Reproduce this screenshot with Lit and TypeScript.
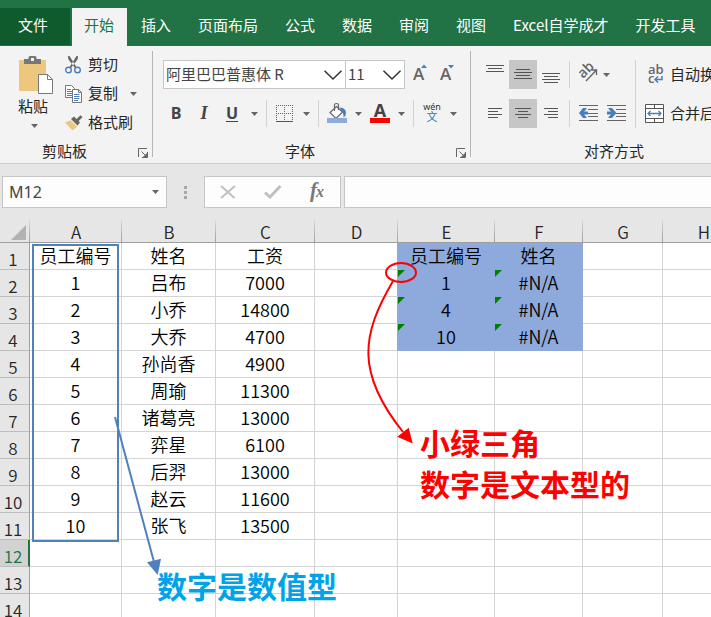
import { LitElement, html, svg, css } from "lit";
import { customElement } from "lit/decorators.js";
import { classMap } from "lit/directives/class-map.js";

const COLUMNS = ["A", "B", "C", "D", "E", "F", "G", "H"];

const ROWS: string[][] = [
  ["员工编号", "姓名", "工资", "", "员工编号", "姓名"],
  ["1", "吕布", "7000", "", "1", "#N/A"],
  ["2", "小乔", "14800", "", "4", "#N/A"],
  ["3", "大乔", "4700", "", "10", "#N/A"],
  ["4", "孙尚香", "4900"],
  ["5", "周瑜", "11300"],
  ["6", "诸葛亮", "13000"],
  ["7", "弈星", "6100"],
  ["8", "后羿", "13000"],
  ["9", "赵云", "11600"],
  ["10", "张飞", "13500"],
  [],
  [],
  [],
];

const CURRENT_ROW = 12;

const TABS = ["开始", "插入", "页面布局", "公式", "数据", "审阅", "视图", "Excel自学成才", "开发工具"];

const arrow = html`<svg class="arrow" width="7" height="4" viewBox="0 0 7 4"><path d="M0 0h7L3.5 4z" fill="#666" /></svg>`;

const chevron = html`<svg class="chevron" width="18" height="10" viewBox="0 0 18 10">
  <path d="M.5 .7 9 9 17.500 .7" fill="none" stroke="#333" stroke-width="1.5" />
</svg>`;

const launcher = html`<svg width="10" height="10" viewBox="0 0 10 10">
  <path d="M.5 9V.5H9M3.500 3.500 8 8M9.500 4v5.500H4" fill="none" stroke="#666" />
  <path d="M9 9V5L5 9z" fill="#666" />
</svg>`;

/* Horizontal rules of an alignment glyph: [x, y, length] */
const lines = (items: number[][]) =>
  html`<svg width="20" height="19" viewBox="0 0 20 19">
    ${items.map(([x, y, w]) => svg`<rect x=${x} y=${y} width=${w} height="1" fill="#555" />`)}
  </svg>`;

const pasteIcon = html`<svg width="34" height="38" viewBox="0 0 34 38">
  <rect x="0" y="4" width="27" height="31" rx="1" fill="#eec77f" />
  <path d="M5 3h4.500V1.500Q9.500 0 11 0h5q1.500 0 1.500 1.500V3H22v5H5z" fill="#777" />
  <rect x="12" y="2" width="3" height="3" fill="#f3f3f3" />
  <path d="M19.500 18.500h9l5 5v14h-14z" fill="#fff" stroke="#777" />
  <path d="M28.500 18.500v5h5" fill="none" stroke="#777" />
</svg>`;

const cutIcon = html`<svg width="16" height="18" viewBox="0 0 16 18">
  <path d="M3 0q-.5 3 2 5.500l5 6.500h2L4.500 0zM13 0q.5 3-2 5.500L6 12H4L11.500 0z" fill="#666" />
  <circle cx="3.500" cy="14" r="2.800" fill="none" stroke="#4a7ebb" stroke-width="1.400" />
  <circle cx="12.500" cy="14" r="2.800" fill="none" stroke="#4a7ebb" stroke-width="1.400" />
</svg>`;

const copyIcon = html`<svg width="17" height="18" viewBox="0 0 17 18">
  <path d="M.5 .5h6l3 3v9h-9z" fill="#fff" stroke="#777" />
  <path d="M2 4.500h4M2 6.500h5M2 8.500h5M2 10.500h5" stroke="#4a7ebb" />
  <path d="M7.500 4.500h6l3 3v10h-9z" fill="#fff" stroke="#777" />
  <path d="M13.500 4.500v3h3" fill="none" stroke="#777" />
  <path d="M9 9.500h5.500M9 11.500h5.500M9 13.500h5.500M9 15.500h4" stroke="#4a7ebb" />
</svg>`;

const brushIcon = html`<svg width="18" height="16" viewBox="0 0 18 16">
  <path d="M0 7.500 6.500 5 13 11 7.500 15.500z" fill="#eec77f" />
  <path d="M6 4 9 1.500 15 7.500 12.500 10.500z" fill="#666" />
  <path d="M11 4.500 15.500 .2 17.500 2 13.300 6.500z" fill="#666" />
  <path d="M5.500 5 12.500 11.500" stroke="#f3f3f3" />
</svg>`;

const growIcon = html`<svg width="20" height="23" viewBox="0 0 20 23">
  <text x="4" y="17" font-size="17" class="glyph">A</text>
  <path d="M12 5h6l-3-3.500z" fill="#4a7ebb" />
</svg>`;

const shrinkIcon = html`<svg width="20" height="23" viewBox="0 0 20 23">
  <text x="3" y="17" font-size="17" class="glyph">A</text>
  <path d="M11 2h6l-3 3.500z" fill="#4a7ebb" />
</svg>`;

const bordersIcon = html`<svg width="18" height="18" viewBox="0 0 18 18">
  <path d="M.5 0v16M8.500 0v16M16.500 0v16M0 .5h17M0 8.500h17" stroke="#666" stroke-dasharray="1 1" />
  <path d="M0 16.500h17" stroke="#555" />
</svg>`;

const fillIcon = html`<svg width="20" height="21" viewBox="0 0 20 21">
  <path d="M9.500 3.500 15.500 9 9 15.500 3 9.500z" fill="#fff" stroke="#666" stroke-width="1.200" />
  <path d="M7.500 8V2q0-1.500 2-1.500t2 1.500v5" fill="none" stroke="#666" stroke-width="1.200" />
  <path d="M13 4.500q6 .5 6 5.500 0 3-2.500 4.500.5-4.500-2.500-6.500z" fill="#4a7ebb" />
  <rect x="0" y="15" width="20" height="5" fill="#8ea9db" />
</svg>`;

const fontColorIcon = html`<svg width="20" height="21" viewBox="0 0 20 21">
  <text x="10" y="14" font-size="18" text-anchor="middle" class="glyph dark">A</text>
  <rect x="0" y="15" width="20" height="5" fill="#f00" />
</svg>`;

const phoneticIcon = html`<svg width="20" height="21" viewBox="0 0 20 21">
  <text x="10" y="7" font-size="9" text-anchor="middle" class="pinyin">wén</text>
  <text x="10" y="18" font-size="11" text-anchor="middle" class="hanzi">文</text>
</svg>`;

const orientationIcon = html`<svg width="20" height="21" viewBox="0 0 20 21">
  <text x="5" y="15" font-size="14" transform="rotate(-45 5 15)" class="glyph">ab</text>
  <path d="M8 17 18 6.500M13.500 6h5v5" fill="none" stroke="#666" stroke-width="1.400" />
</svg>`;

const indentIcon = (inward: boolean) => html`<svg width="19" height="19" viewBox="0 0 19 19">
  <path d="M0 1.500h19M9 5.500h10M9 9.500h10M9 12.500h10M0 16.500h19" stroke="#666" />
  <path
    d=${inward ? "M0 7.500h4L1.500 5V4H5l4.500 5L5 14H1.500v-1L4 10.500H0z" : "M9 7.500H5L7.500 5V4H4L0 9l4 5h3.500v-1L5 10.500h4z"}
    fill="#4a7ebb"
  />
</svg>`;

const wrapIcon = html`<svg width="19" height="20" viewBox="0 0 19 20">
  <text class="glyph" font-size="13"><tspan x="3" y="9">ab</tspan><tspan x="3" y="18">c</tspan></text>
  <path d="M17 11v3.500H10M13 11.500 10 14.500 13 17.500" fill="none" stroke="#4a7ebb" stroke-width="1.500" />
</svg>`;

const mergeIcon = html`<svg width="19" height="19" viewBox="0 0 19 19">
  <path d="M.5 .5h18v18H.5zM.5 4.500h18M.5 14.500h18M9.500 .5v4M9.500 14.500v4" fill="#fff" stroke="#555" />
  <path d="M3 9.500h13M5.500 7 3 9.500 5.500 12M13.500 7 16 9.500 13.500 12" fill="none" stroke="#4a7ebb" stroke-width="1.300" />
</svg>`;

const cancelIcon = html`<svg width="16" height="14" viewBox="0 0 16 14">
  <path d="M1 1 14.500 13M15 1 1 13" stroke="#c0c0c0" stroke-width="2" />
</svg>`;

const enterIcon = html`<svg width="18" height="14" viewBox="0 0 18 14">
  <path d="M1 7.500 6 12 16.500 1" fill="none" stroke="#c0c0c0" stroke-width="3" />
</svg>`;

const functionIcon = html`<svg width="20" height="22" viewBox="0 0 20 22">
  <text y="16" class="fx"><tspan x="2" font-size="21">f</tspan><tspan x="8" font-size="16">x</tspan></text>
</svg>`;

@customElement("app-root")
export class AppRoot extends LitElement {
  static styles = css`
    :host {
      display: flex;
      flex-direction: column;
      height: 100vh;
      overflow: hidden;
      background: #fff;
      color: #262626;
      font: 15px/20px "Noto Sans CJK SC", "Noto Sans", sans-serif;
    }
    * { box-sizing: border-box; }
    svg { display: block; flex: none; overflow: visible; }
    button, select, input {
      margin: 0;
      padding: 0;
      border: 0;
      border-radius: 0;
      background: none;
      color: inherit;
      font: inherit;
    }
    button {
      display: flex;
      align-items: center;
      justify-content: center;
      white-space: nowrap;
    }

    /* Tabs */
    .tabs {
      display: flex;
      flex: none;
      padding-top: 8px;
      background: #217346;
      color: #fff;
      overflow: hidden;
    }
    .tab { flex: none; height: 38px; padding: 0 15px 4px 12px; }
    .tab.file { width: 70px; margin-right: 2px; padding: 0 4px 3px 0; background: #0f5b2e; height: 37px; }
    .tab.active { width: 55px; margin-right: 2px; padding: 0 1px 4px 0; background: #f3f3f3; color: #217346; }

    /* Ribbon */
    .ribbon {
      display: flex;
      flex: none;
      background: #f3f3f3;
      border-bottom: 1px solid #cfcfcf;
      overflow: hidden;
    }
    .group { display: flex; flex-direction: column; flex: none; padding-top: 4px; }
    .body { display: flex; height: 91px; padding-left: 10px; padding-top: 10px; align-items: flex-start; }
    .clipboard .body { padding: 0 10px 0 7px; }
    .caption { display: flex; align-items: center; height: 22px; }
    .caption span { flex: 1; padding-bottom: 2px; text-align: center; }
    .caption button { width: 23px; height: 22px; padding: 2px 0 0 4px; }
    .clipboard { width: 152px; }
    .font { width: 317px; }
    .alignment { width: 309px; }
    .divider { flex: none; width: 1px; margin: 5px 0 6px; background: #b5b5b5; }
    .stack { display: flex; flex-direction: column; gap: 10px; }
    .line { display: flex; height: 29px; }
    .sep { width: 1px; margin: 1px 4px; background: #d2d2d2; }
    .sep.tall { height: 68px; margin: 0 5px; }
    .tool { width: 28px; height: 29px; }
    .tool.on { background: #c6c6c6; }
    .drop { width: 15px; height: 29px; }
    .drop.tight { width: 8px; }
    .wide { justify-content: flex-start; height: 29px; padding-left: 4px; }
    .wide svg:first-child { margin-right: 6px; }
    .wide span { padding-bottom: 2px; }
    .wide .arrow { margin-left: 8px; }

    .paste { flex-direction: column; justify-content: flex-start; width: 54px; padding-top: 6px; }
    .paste svg:first-child { margin-left: 4px; }
    .paste span { margin: 2px 2px 8px 0; }
    .edits { margin-left: 4px; }
    .edit { display: flex; height: 29px; }
    .edit button:first-child { justify-content: flex-start; }
    .edit .pic { display: flex; width: 23px; }
    .edit .label { padding-bottom: 2px; }
    .edit .drop { margin-left: 8px; }

    .combo { display: grid; height: 29px; align-items: center; border: 1px solid #c6c6c6; background: #fff; }
    .combo select { grid-area: 1 / 1; appearance: none; width: 100%; height: 27px; padding: 0 2px 2px; color: #444; }
    .combo .chevron { grid-area: 1 / 1; justify-self: end; margin-right: 3px; pointer-events: none; }
    .combo.face { width: 183px; }
    .combo.size { width: 60px; margin-left: -1px; }

    .bold, .italic, .underline { padding: 0 2px 2px 0; font: bold 16px/20px "Open Sans", "Noto Sans", sans-serif; color: #444; }
    .italic { font-family: "Liberation Serif", serif; font-style: italic; font-size: 18px; }
    .underline { text-decoration: underline; text-underline-offset: 2px; }
    .glyph { font-family: "Open Sans", sans-serif; font-weight: 600; fill: #666; }
    .glyph.dark { font-weight: 700; fill: #444; }
    .pinyin { font-family: "Noto Sans", sans-serif; fill: #333; }
    .hanzi { font-family: "Noto Sans CJK SC", sans-serif; fill: #2f75b5; }
    .fx { font-family: "Liberation Serif", serif; font-style: italic; font-weight: bold; fill: #777; }

    /* Formula bar */
    .formula { display: flex; flex: none; padding: 12px 0 12px 2px; background: #e6e6e6; }
    .field { display: flex; align-items: center; height: 32px; border: 1px solid #c6c6c6; background: #fdfdfd; }
    .name { width: 165px; padding-right: 7px; }
    .name input { flex: 1; min-width: 0; height: 30px; padding-left: 6px; font: 16px/20px "Noto Sans", sans-serif; color: #444; }
    .grip { align-self: center; margin: 0 17px; }
    .actions { width: 137px; }
    .actions button { flex: 1; height: 30px; }
    .entry { flex: 1; min-width: 0; margin-left: 3px; border-right: 0; }
    .entry input { flex: 1; height: 30px; padding: 0 6px; }

    /* Sheet */
    .sheet { position: relative; flex: 1; min-height: 0; overflow: hidden; color: #000; }
    table { width: 100%; table-layout: fixed; border-collapse: separate; border-spacing: 0; }
    .c-head { width: 30px; }
    .c-A { width: 92px; }
    .c-B { width: 94px; }
    .c-C { width: 99px; }
    .c-D { width: 83px; }
    .c-E { width: 97px; }
    .c-F { width: 88px; }
    .c-G { width: 80px; }
    .c-H { width: 82px; }
    th, td { padding: 0; text-align: center; white-space: nowrap; }
    th { font-size: 17px; font-weight: 350; line-height: 20px; color: #262626; }
    thead th {
      height: 23px;
      padding-top: 2px;
      background: linear-gradient(#d8d8d8, #a0a0a0) no-repeat right / 1px 100%, #e6e6e6;
      border-bottom: 1px solid #9f9f9f;
    }
    .corner svg { margin: 0 0 0 11px; }
    tbody th {
      height: 27px;
      padding: 6px 3px 0 0;
      background: #e6e6e6;
      border-right: 1px solid #9f9f9f;
      border-bottom: 1px solid #bdbdbd;
    }
    tbody th.current { background: #d2d2d2; color: #217346; border-right: 2px solid #217346; padding-right: 2px; }
    td {
      position: relative;
      height: 27px;
      padding-bottom: 2px;
      font-size: 18px;
      font-weight: 350;
      line-height: 24px;
      border-right: 1px solid #d4d4d4;
      border-bottom: 1px solid #d4d4d4;
    }
    td.filled { background: #8ea9db; border-color: #8ea9db; }
    td.before { border-right-color: #8ea9db; }
    td.textual::before {
      content: "";
      position: absolute;
      top: 0;
      left: 0;
      border-top: 7px solid #008000;
      border-right: 7px solid transparent;
    }

    /* Drawn notes over the cells */
    .marks { position: absolute; top: 0; left: 0; pointer-events: none; }
    .note { position: absolute; margin: 0; font-size: 30px; font-weight: 700; line-height: 41px; white-space: nowrap; }
    .note.red { left: 420px; top: 202px; color: #f00; }
    .note.blue { left: 157px; top: 345px; color: #00a2e8; }
  `;

  private tool(label: string, content: unknown, on = false) {
    return html`<button class=${classMap({ tool: true, on })} aria-label=${label}>${content}</button>`;
  }

  private drop(label: string, tight = false) {
    return html`<button class=${classMap({ drop: true, tight })} aria-label=${label}>${arrow}</button>`;
  }

  private edit(label: string, icon: unknown) {
    return html`<button><span class="pic">${icon}</span><span class="label">${label}</span></button>`;
  }

  private renderClipboard() {
    return html`<section class="group clipboard">
      <div class="body">
        <button class="paste">${pasteIcon}<span>粘贴</span>${arrow}</button>
        <div class="edits">
          <div class="edit">${this.edit("剪切", cutIcon)}</div>
          <div class="edit">${this.edit("复制", copyIcon)}${this.drop("复制选项")}</div>
          <div class="edit">${this.edit("格式刷", brushIcon)}</div>
        </div>
      </div>
      <div class="caption"><span>剪贴板</span><button aria-label="剪贴板设置">${launcher}</button></div>
    </section>`;
  }

  private renderFont() {
    return html`<section class="group font">
      <div class="body">
        <div class="stack">
          <div class="line">
            <div class="combo face">
              <select aria-label="字体"><option>阿里巴巴普惠体 R</option></select>${chevron}
            </div>
            <div class="combo size">
              <select aria-label="字号"><option>11</option></select>${chevron}
            </div>
            ${this.tool("增大字号", growIcon)} ${this.tool("减小字号", shrinkIcon)}
          </div>
          <div class="line">
            <button class="tool bold">B</button>
            <button class="tool italic">I</button>
            <button class="tool underline">U</button>
            ${this.drop("下划线选项")}
            <div class="sep"></div>
            ${this.tool("边框", bordersIcon)} ${this.drop("边框选项")}
            <div class="sep"></div>
            ${this.tool("填充颜色", fillIcon)} ${this.drop("填充颜色选项")}
            ${this.tool("字体颜色", fontColorIcon)} ${this.drop("字体颜色选项")}
            <div class="sep"></div>
            ${this.tool("拼音", phoneticIcon)} ${this.drop("拼音选项")}
          </div>
        </div>
      </div>
      <div class="caption"><span>字体</span><button aria-label="字体设置">${launcher}</button></div>
    </section>`;
  }

  private renderAlignment() {
    return html`<section class="group alignment">
      <div class="body">
        <div class="stack">
          <div class="line">
            ${this.tool("顶端对齐", lines([[1, 0, 18], [3, 3, 14], [1, 6, 18]]))}
            ${this.tool("垂直居中", lines([[3, 4, 14], [1, 7, 18], [3, 10, 14], [1, 13, 18]]), true)}
            ${this.tool("底端对齐", lines([[1, 8, 18], [3, 11, 14], [1, 14, 18], [3, 17, 14]]))}
            <div class="sep"></div>
            ${this.tool("方向", orientationIcon)} ${this.drop("方向选项", true)}
          </div>
          <div class="line">
            ${this.tool("左对齐", lines([[3, 4, 14], [3, 7, 10], [3, 10, 14], [3, 13, 10]]))}
            ${this.tool("居中", lines([[2, 4, 16], [5, 7, 10], [2, 10, 16], [5, 13, 10]]), true)}
            ${this.tool("右对齐", lines([[3, 4, 14], [7, 7, 10], [3, 10, 14], [7, 13, 10]]))}
            <div class="sep"></div>
            ${this.tool("减少缩进量", indentIcon(false))} ${this.tool("增加缩进量", indentIcon(true))}
          </div>
        </div>
        <div class="sep tall"></div>
        <div class="stack">
          <button class="wide">${wrapIcon}<span>自动换行</span></button>
          <button class="wide">${mergeIcon}<span>合并后居中</span>${arrow}</button>
        </div>
      </div>
      <div class="caption"><span>对齐方式</span><button aria-label="对齐设置">${launcher}</button></div>
    </section>`;
  }

  private renderTable() {
    return html`<table>
      <colgroup>
        <col class="c-head" />
        ${COLUMNS.map((c) => html`<col class=${"c-" + c} />`)}
        <col />
      </colgroup>
      <thead>
        <tr>
          <th class="corner">
            <svg width="15" height="15" viewBox="0 0 15 15"><path d="M15 0v15H0z" fill="#b2b2b2" /></svg>
          </th>
          ${COLUMNS.map((c) => html`<th scope="col">${c}</th>`)}
          <th></th>
        </tr>
      </thead>
      <tbody>
        ${ROWS.map(
          (row, r) => html`<tr>
            <th scope="row" class=${classMap({ current: r + 1 === CURRENT_ROW })}>${r + 1}</th>
            ${COLUMNS.map((c, i) => {
              const filled = r < 4 && (c === "E" || c === "F");
              return html`<td class=${classMap({ filled, before: r < 4 && c === "D", textual: filled && r > 0 })}>${row[i] ?? ""}</td>`;
            })}
            <td></td>
          </tr>`
        )}
      </tbody>
    </table>`;
  }

  render() {
    return html`
      <nav class="tabs">
        <button class="tab file">文件</button>
        ${TABS.map((t, i) => html`<button class=${classMap({ tab: true, active: i === 0 })}>${t}</button>`)}
      </nav>
      <div class="ribbon">
        ${this.renderClipboard()}
        <div class="divider"></div>
        ${this.renderFont()}
        <div class="divider"></div>
        ${this.renderAlignment()}
      </div>
      <div class="formula">
        <div class="field name"><input aria-label="名称框" .value=${"M12"} />${arrow}</div>
        <svg class="grip" width="3" height="13" viewBox="0 0 3 13">
          <path d="M0 0h3v3H0zM0 5h3v3H0zM0 10h3v3H0z" fill="#a8a8a8" />
        </svg>
        <div class="field actions">
          <button aria-label="取消">${cancelIcon}</button>
          <button aria-label="输入">${enterIcon}</button>
          <button aria-label="插入函数">${functionIcon}</button>
        </div>
        <div class="field entry"><input aria-label="编辑栏" /></div>
      </div>
      <div class="sheet">
        ${this.renderTable()}
        <svg class="marks" width="711" height="397" viewBox="0 220 711 397">
          <rect x="33" y="245" width="85" height="296" fill="none" stroke="#4f81bd" stroke-width="2" />
          <path d="M115 417 154 562" stroke="#4f81bd" stroke-width="2" />
          <path d="M157.700 575 147 562.300 161 558.700z" fill="#4f81bd" />
          <ellipse cx="401" cy="272.500" rx="15" ry="9.500" fill="none" stroke="#f00" stroke-width="2" />
          <path d="M393 281C362 334 355 372 403 432" fill="none" stroke="#f00" stroke-width="2" />
          <path d="M412.700 443.500 397.300 436.700 408.700 427.700z" fill="#f00" />
        </svg>
        <p class="note red">小绿三角<br />数字是文本型的</p>
        <p class="note blue">数字是数值型</p>
      </div>
    `;
  }
}
